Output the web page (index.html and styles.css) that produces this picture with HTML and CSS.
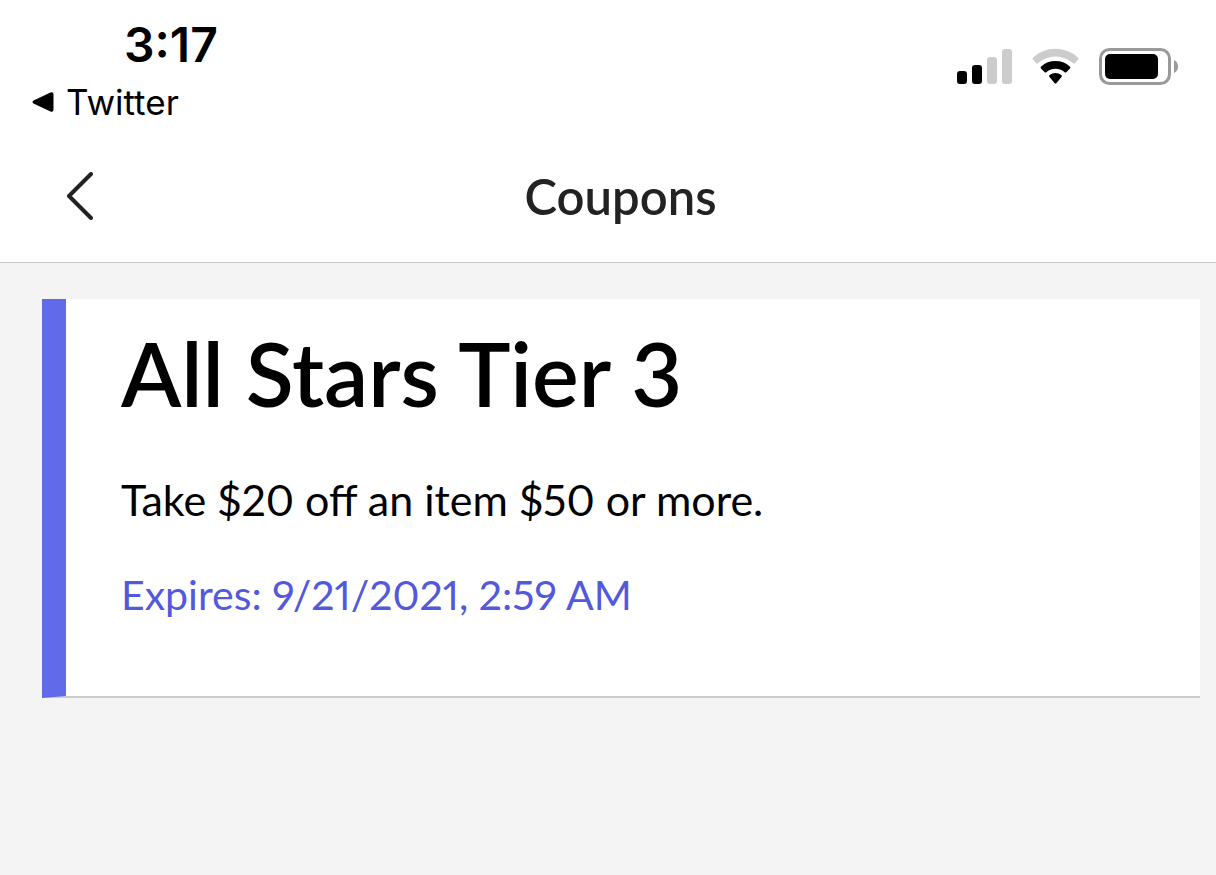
FILE: index.html
```html
<!DOCTYPE html>
<html lang="en">
<head>
<meta charset="utf-8">
<meta name="viewport" content="width=device-width, initial-scale=1">
<title>Coupons</title>
<link rel="stylesheet" href="styles.css">
</head>
<body>
<div class="status">
  <div class="status-left">
    <time class="clock">3:17</time>
    <a class="return" href="#">
      <svg width="22" height="20" viewBox="0 0 22 20" aria-hidden="true"><path d="M1.500 8.500 18.500 .5Q21.500-.5 21.500 2.500V17.500Q21.500 20.500 18.500 19.500L1.500 11.500Q-.5 10 1.500 8.500Z"/></svg>
      <span>Twitter</span>
    </a>
  </div>
  <div class="status-icons">
    <svg width="56" height="36" viewBox="0 0 56 36" role="img" aria-label="Signal"><rect x="0" y="23" width="10" height="13" rx="3"/><rect x="15" y="17" width="10" height="19" rx="3"/><rect x="30" y="9" width="10" height="27" rx="3" fill="#ccc"/><rect x="45" y="1" width="10" height="35" rx="3" fill="#ccc"/></svg>
    <svg width="48" height="36" viewBox="0 0 48 36" role="img" aria-label="Wi-Fi"><path d="M1.200 9.500A33 33 0 0 1 45.800 9.500Q47 10.500 46 11.600L43 15Q42 16 40.900 15A26.500 26.500 0 0 0 6.100 15Q5 16 4 15L1 11.600Q0 10.500 1.200 9.500Z" fill="#ccc"/><path d="M9.200 18.500A21.500 21.500 0 0 1 37.800 18.500Q39 19.500 38 20.600L34.500 24Q33.500 25 32.400 24A14 14 0 0 0 14.600 24Q13.500 25 12.500 24L9 20.600Q8 19.500 9.200 18.500Z"/><path d="M17.600 27A9.500 9.500 0 0 1 29.400 27Q30.500 28 29.500 29.100L24.500 35Q23.500 36 22.500 35L17.500 29.100Q16.500 28 17.600 27Z"/></svg>
    <svg width="80" height="38" viewBox="0 0 80 38" role="img" aria-label="Battery"><rect x="1.500" y="1.500" width="69" height="34" rx="9" fill="none" stroke="#999" stroke-width="3"/><rect x="6" y="6" width="53" height="25" rx="5"/><path d="M75 12Q79 14 79 18.500Q79 23 75 25Z" fill="#999"/></svg>
  </div>
</div>
<header class="nav">
  <button class="back" type="button" aria-label="Back"><svg width="28" height="48" viewBox="0 0 28 48"><path d="M25 2 3 24 25 46" fill="none" stroke="#222" stroke-width="4" stroke-linecap="round" stroke-linejoin="round"/></svg></button>
  <h1 class="title">Coupons</h1>
</header>
<main class="content">
  <article class="coupon">
    <h2 class="coupon-name">All Stars Tier 3</h2>
    <p class="coupon-text">Take $20 off an item $50 or more.</p>
    <p class="coupon-text expires">Expires: 9/21/2021, 2:59 AM</p>
  </article>
</main>
</body>
</html>
```
FILE: styles.css
```css
* { box-sizing: border-box; }
body { margin: 0; min-height: 100vh; background: #f4f4f4; color: #000; font-family: Lato, sans-serif; }
h1, h2, p { margin: 0; }
.status { display: flex; justify-content: space-between; align-items: flex-start; padding: 14px 37px 4px 32px; background: #fff; font-family: Inter, sans-serif; }
.clock { display: block; padding-left: 92px; font-size: 48px; line-height: 62px; font-weight: 600; }
.return { display: flex; align-items: center; gap: 12px; font-size: 35px; line-height: 52px; color: #000; text-decoration: none; }
.status-icons { display: flex; gap: 19px; padding-top: 34px; }
.nav { display: grid; grid-template-columns: 1fr auto 1fr; align-items: center; padding: 32px 41px 34px 66px; background: #fff; border-bottom: 1px solid #ccc; }
.back { justify-self: start; display: flex; padding: 0; border: 0; background: none; }
.title { font-size: 49px; line-height: 64px; font-weight: 600; color: #222; }
.content { padding: 36px 16px 36px 42px; }
.coupon { padding: 26px 55px 71px; background: #fff; border-left: 24px solid #616bea; border-bottom: 2px solid #ccc; }
.coupon-name { font-size: 88px; line-height: 96px; font-weight: 600; }
.coupon-text { margin-top: 49px; font-size: 43px; line-height: 60px; font-variant-numeric: proportional-nums; }
.expires { margin-top: 35px; font-size: 41px; color: #5359dc; }
```
